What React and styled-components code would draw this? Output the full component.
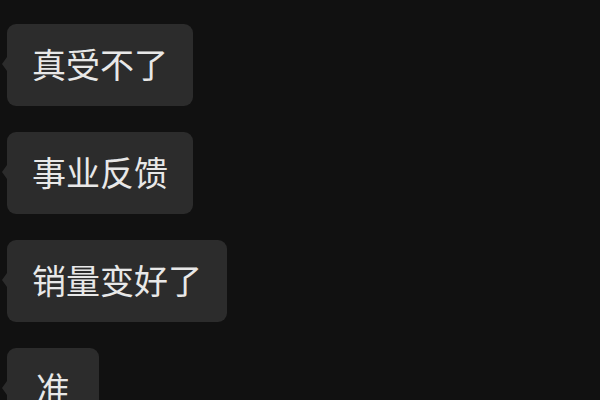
import { createGlobalStyle, styled } from "styled-components";

const GlobalStyle = createGlobalStyle`
  html, body {
    margin: 0;
    padding: 0;
    background: #111111;
  }
  body {
    font-family: "Noto Sans CJK SC", "Noto Sans", sans-serif;
  }
`;

const Screen = styled.div`
  width: 600px;
  height: 400px;
  overflow: hidden;
  background: #111111;
  display: flex;
  flex-direction: column;
  align-items: flex-start;
  gap: 26px;
  padding: 24px 0 0 7px;
  box-sizing: border-box;
`;

const Bubble = styled.div`
  position: relative;
  flex-shrink: 0;
  height: 82px;
  min-width: ${(props) => props.$minWidth || 0}px;
  box-sizing: border-box;
  padding: 0 25px 2px 25px;
  display: flex;
  align-items: center;
  justify-content: center;
  background: #2c2c2c;
  border-radius: 9px;
  color: #e8e8e8;
  font-size: 34px;
  line-height: 1;
  letter-spacing: 0;

  &::before {
    content: "";
    position: absolute;
    left: -5px;
    top: 33px;
    border-top: 7px solid transparent;
    border-bottom: 7px solid transparent;
    border-right: 5px solid #2c2c2c;
  }
`;

const messages = [
  { text: "真受不了" },
  { text: "事业反馈" },
  { text: "销量变好了" },
  { text: "准", minWidth: 92 },
];

export default function App() {
  return (
    <>
      <GlobalStyle />
      <Screen>
        {messages.map((m) => (
          <Bubble key={m.text} $minWidth={m.minWidth}>
            {m.text}
          </Bubble>
        ))}
      </Screen>
    </>
  );
}
